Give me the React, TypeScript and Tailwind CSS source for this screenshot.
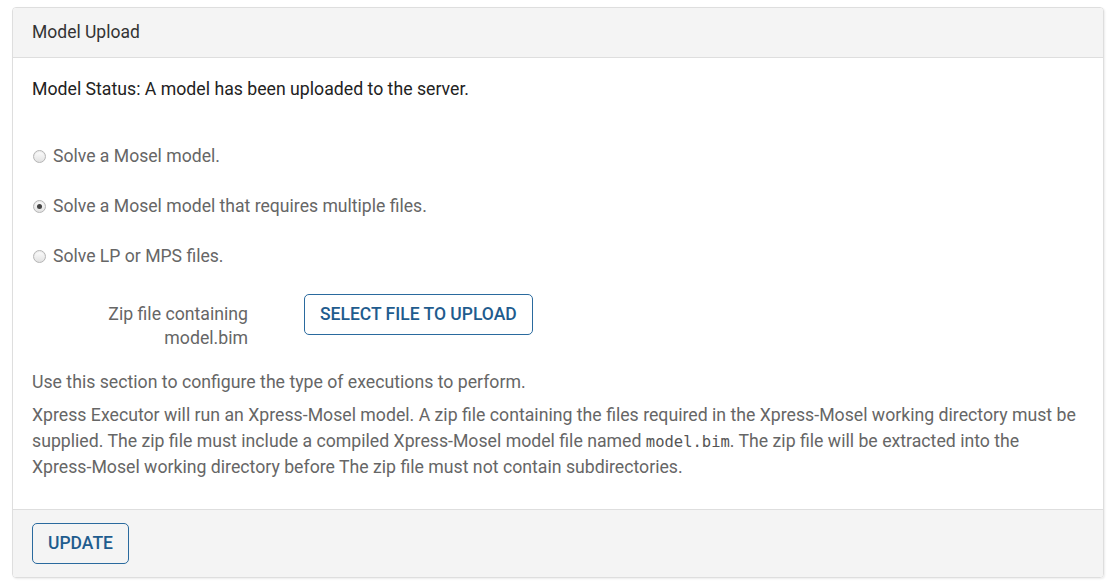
import React from "react";

function Radio({ checked }: { checked?: boolean }) {
  return (
    <span className="inline-flex h-[13px] w-[13px] shrink-0 items-center justify-center rounded-full border border-[#b5b5b5] bg-gradient-to-b from-[#fdfdfd] to-[#e2e2e2] shadow-[inset_0_1px_1px_rgba(0,0,0,0.08)]">
      {checked && <span className="h-[5px] w-[5px] rounded-full bg-[#444]" />}
    </span>
  );
}

export default function App() {
  return (
    <div className="min-h-[585px] bg-white pl-[12px] pr-[9px] pt-[7px] font-['Roboto',sans-serif]">
      <div className="overflow-hidden rounded-[4px] border border-[#dedede] shadow-[1px_1px_2px_rgba(0,0,0,0.08)]">
        <div className="flex h-[50px] items-center border-b border-[#dedede] bg-[#f4f4f4] px-[19px] text-[17.5px] text-[#333]">
          Model Upload
        </div>
        <div className="bg-white px-[19px] pb-[28px]">
          <div className="pt-[19px] text-[17.7px] leading-[24px] text-[#222]">
            Model Status: A model has been uploaded to the server.
          </div>
          <div className="mt-[43px] flex flex-col gap-[26px] text-[17.6px] text-[#666]">
            <label className="flex h-[24px] items-center gap-[7px] pl-[1px]">
              <Radio /> Solve a Mosel model.
            </label>
            <label className="flex h-[24px] items-center gap-[7px] pl-[1px]">
              <Radio checked /> Solve a Mosel model that requires multiple files.
            </label>
            <label className="flex h-[24px] items-center gap-[7px] pl-[1px]">
              <Radio /> Solve LP or MPS files.
            </label>
          </div>
          <div className="mt-[26px] flex items-start">
            <div className="w-[216px] pt-[8px] text-right text-[17.7px] leading-[24px] text-[#666]">
              Zip file containing
              <br />
              model.bim
            </div>
            <button className="ml-[56px] h-[41px] rounded-[5px] border border-[#2a6a9e] px-[15px] text-[17.5px] font-medium text-[#1f5c8e]">
              SELECT FILE TO UPLOAD
            </button>
          </div>
          <div className="mt-[20px] text-[17.7px] leading-[24px] text-[#666]">
            Use this section to configure the type of executions to perform.
          </div>
          <div className="mt-[9px] text-[17.7px] leading-[25.5px] text-[#666]">
            Xpress Executor will run an Xpress-Mosel model. A zip file containing the files required in the Xpress-Mosel working directory must be
            supplied. The zip file must include a compiled Xpress-Mosel model file named{" "}
            <code className="font-['DejaVu_Sans_Mono',monospace] text-[15.5px] text-[#555]">model.bim</code>. The zip file will be extracted into the{" "}
            <span className="whitespace-nowrap">Xpress-Mosel</span> working directory before The zip file must not contain subdirectories.
          </div>
        </div>
        <div className="border-t border-[#dedede] bg-[#f4f4f4] px-[19px] py-[13px]">
          <button className="h-[41px] rounded-[5px] border border-[#2a6a9e] px-[15px] text-[17.5px] font-medium text-[#1f5c8e]">
            UPDATE
          </button>
        </div>
      </div>
    </div>
  );
}
